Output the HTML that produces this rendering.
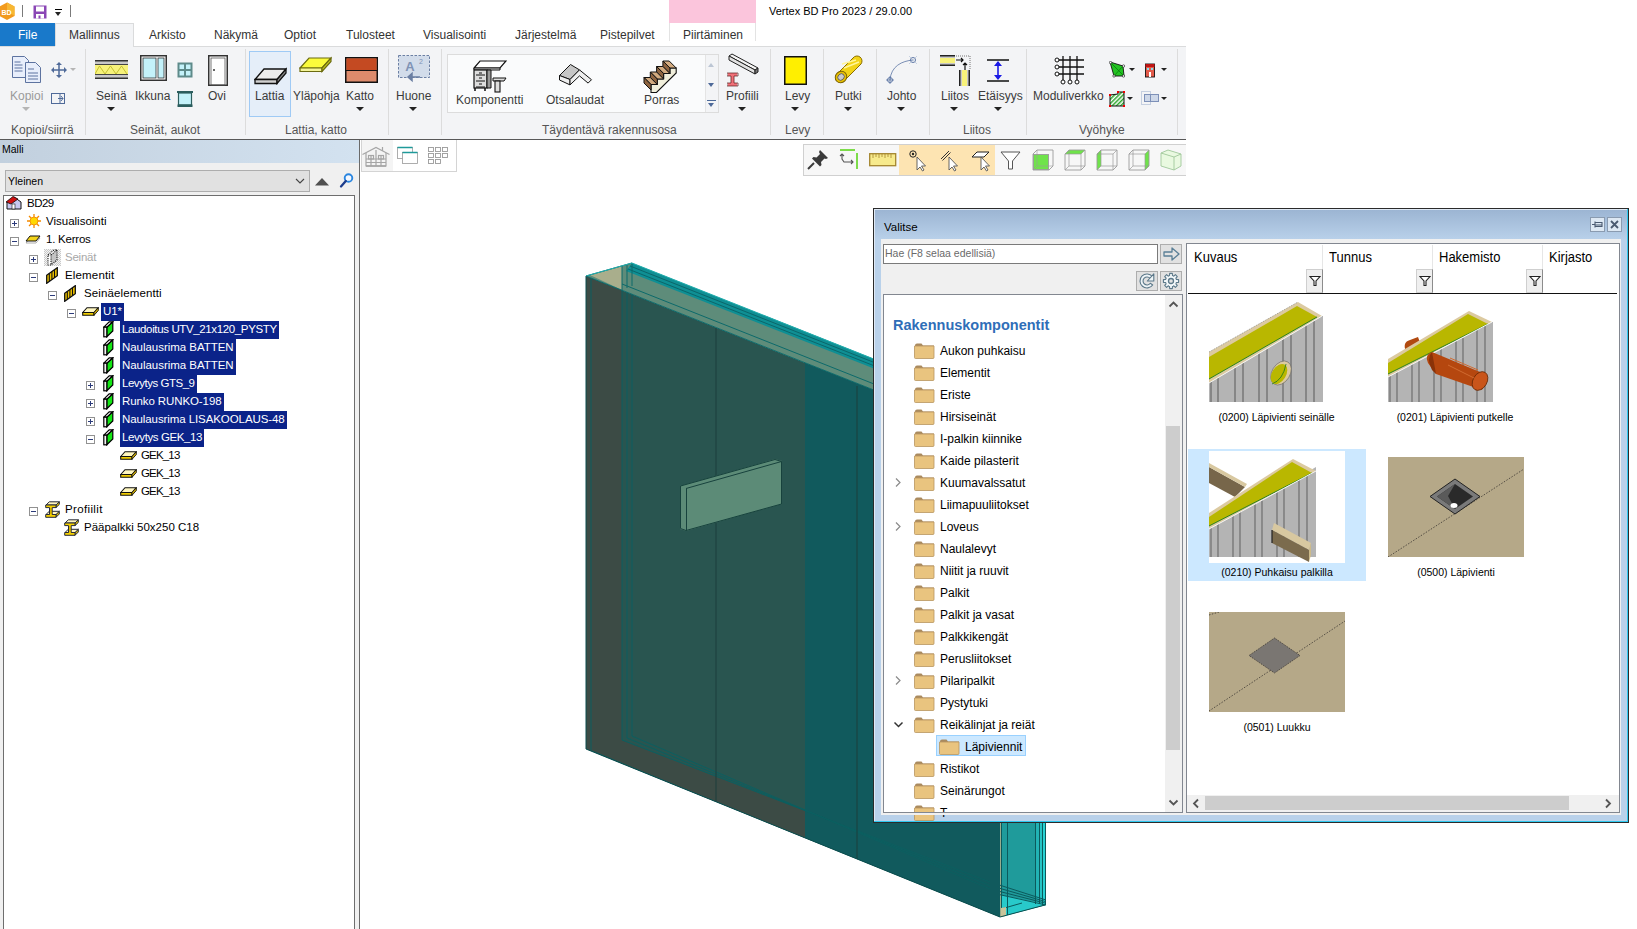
<!DOCTYPE html>
<html><head><meta charset="utf-8">
<style>
*{margin:0;padding:0;box-sizing:border-box}
html,body{width:1637px;height:929px;overflow:hidden;background:#fff;font-family:"Liberation Sans",sans-serif;color:#000}
.a{position:absolute}
.t{position:absolute;white-space:nowrap;line-height:1}
.rl{font-size:12px;color:#3b3b3b}
.gl{font-size:12px;color:#555}
.tab{font-size:12px;color:#333}
.sep{position:absolute;width:1px;background:#dcdcdc;top:49px;height:86px}
.dd{position:absolute;width:0;height:0;border-left:4px solid transparent;border-right:4px solid transparent;border-top:4px solid #222}
.tr{font-size:11.5px}
.sel{background:#0a246a;color:#fff;padding:0 2px}
.exp{position:absolute;width:9px;height:9px;border:1px solid #919191;background:#fff}
.exp:before{content:"";position:absolute;left:1px;top:3px;width:5px;height:1px;background:#2c3b7a}
.exp.p:after{content:"";position:absolute;left:3px;top:1px;width:1px;height:5px;background:#2c3b7a}
.fold{position:absolute;width:20px;height:15px}
.dt{font-size:12px;color:#000}
.cap{font-size:10.5px;color:#000}
</style></head><body>

<!-- title bar -->
<div class="a" style="left:669px;top:0;width:87px;height:23px;background:#fbc5dc"></div>
<div class="t" style="left:769px;top:6px;font-size:11px;color:#000">Vertex BD Pro 2023 / 29.0.00</div>

<!-- tabs -->
<div class="a" style="left:0;top:23px;width:55px;height:23px;background:#1979ca"></div>
<div class="t tab" style="left:18px;top:29px;color:#fff">File</div>
<div class="a" style="left:55px;top:23px;width:79px;height:24px;background:#f3f4f6;border:1px solid #dadbdc;border-bottom:none"></div>
<div class="t tab" style="left:69px;top:29px">Mallinnus</div>
<div class="t tab" style="left:149px;top:29px">Arkisto</div>
<div class="t tab" style="left:214px;top:29px">Näkymä</div>
<div class="t tab" style="left:284px;top:29px">Optiot</div>
<div class="t tab" style="left:346px;top:29px">Tulosteet</div>
<div class="t tab" style="left:423px;top:29px">Visualisointi</div>
<div class="t tab" style="left:515px;top:29px">Järjestelmä</div>
<div class="t tab" style="left:600px;top:29px">Pistepilvet</div>
<div class="a" style="left:669px;top:23px;width:87px;height:18px;border-left:1px solid #e3e3e3;border-right:1px solid #e3e3e3"></div>
<div class="t tab" style="left:683px;top:29px">Piirtäminen</div>

<!-- ribbon -->
<div class="a" style="left:0;top:46px;width:1186px;height:93px;background:#f3f4f6;border-top:1px solid #dadbdc"></div>
<div class="a" style="left:55px;top:46px;width:78px;height:2px;background:#f3f4f6"></div>
<div class="a" style="left:0;top:139px;width:1186px;height:1px;background:#585858"></div>
<!-- quick access -->
<svg class="a" style="left:0;top:2px" width="16" height="19" viewBox="0 0 16 19"><polygon points="7,0.5 14.5,4.5 14.5,14 7,18 -0.5,14 -0.5,4.5" fill="#f29a1d"/><polygon points="7,0.5 14.5,4.5 14.5,14 7,9" fill="#f7b733"/><text x="6.5" y="12.5" font-family="Liberation Sans" font-size="7" font-weight="bold" fill="#fff" text-anchor="middle">BD</text></svg>
<div class="a" style="left:22px;top:5px;width:1px;height:12px;background:#7a7a7a"></div>
<svg class="a" style="left:33px;top:5px" width="14" height="14" viewBox="0 0 14 14"><rect x="0.5" y="0.5" width="13" height="13" fill="#8a46b5"/><rect x="3" y="1.5" width="8" height="5" fill="#fff"/><rect x="3" y="9" width="8" height="4.5" fill="#fff"/><rect x="5.5" y="10.5" width="2" height="3" fill="#8a46b5"/></svg>
<div class="a" style="left:55px;top:9px;width:7px;height:1px;background:#000"></div>
<div class="dd" style="left:55px;top:12px;border-left-width:3.5px;border-right-width:3.5px;border-top-width:4px"></div>
<div class="a" style="left:70px;top:5px;width:1px;height:12px;background:#7a7a7a"></div>

<!-- Kopioi/siirra group -->
<svg class="a" style="left:12px;top:56px" width="31" height="27" viewBox="0 0 31 27"><path d="M0.5 0.5h12l4 4v17h-16z" fill="#e8eefb" stroke="#5d73a0"/><path d="M2.5 6h6M2.5 9h8M2.5 12h8M2.5 15h8" stroke="#5d73a0"/><path d="M13.5 6.5h10l5 5v15h-15z" fill="#e8eefb" stroke="#5d73a0"/><path d="M16 13h6M16 17h10M16 20h10M16 23h10" stroke="#5d73a0"/></svg>
<svg class="a" style="left:51px;top:62px" width="16" height="16" viewBox="0 0 16 16"><path d="M8 1v14M1 8h14" stroke="#4f6a99" stroke-width="1.5"/><path d="M8 0l-3 3h6zM8 16l-3-3h6zM0 8l3-3v6zM16 8l-3-3v6z" fill="#4f6a99"/></svg>
<div class="dd" style="left:70px;top:68px;border-top-color:#b5b5b5;border-left-width:3px;border-right-width:3px;border-top-width:3px"></div>
<div class="t rl" style="left:10px;top:90px;color:#9a9a9a">Kopioi</div>
<div class="dd" style="left:22px;top:107px;border-top-color:#b5b5b5"></div>
<svg class="a" style="left:51px;top:93px" width="15" height="11" viewBox="0 0 15 11"><rect x="0.5" y="0.5" width="13" height="10" fill="none" stroke="#4f6a99"/><path d="M7 5.5h5M10 3l2 2.5-2 2.5M9 0v11" stroke="#4f6a99" fill="none"/></svg>
<div class="t gl" style="left:11px;top:124px">Kopioi/siirrä</div>
<div class="sep" style="left:85px"></div>

<!-- Seinat, aukot -->
<svg class="a" style="left:95px;top:60px" width="33" height="19" viewBox="0 0 33 19"><rect x="0" y="0" width="33" height="19" fill="#c8c8c8"/><rect x="0" y="0" width="33" height="1.5" fill="#333"/><rect x="0" y="4" width="33" height="1" fill="#444"/><rect x="0" y="5" width="33" height="9" fill="#f7f27a"/><path d="M0 14l4.5-8 5.5 8 5.5-8 5.5 8 5.5-8 5.5 8" fill="none" stroke="#b8b420" stroke-width="0.8"/><rect x="0" y="14" width="33" height="1" fill="#444"/><rect x="0" y="17.5" width="33" height="1.5" fill="#333"/></svg>
<div class="t rl" style="left:96px;top:90px">Seinä</div>
<div class="dd" style="left:107px;top:107px"></div>
<svg class="a" style="left:140px;top:55px" width="27" height="26" viewBox="0 0 27 26"><rect x="0.75" y="0.75" width="25.5" height="24.5" fill="#fff" stroke="#333" stroke-width="1.5"/><rect x="3" y="3" width="13" height="20" fill="#c4f2fa" stroke="#333" stroke-width="0.8"/><rect x="18" y="3" width="6" height="20" fill="#c4f2fa" stroke="#333" stroke-width="0.8"/></svg>
<div class="t rl" style="left:135px;top:90px">Ikkuna</div>
<svg class="a" style="left:177px;top:62px" width="16" height="16" viewBox="0 0 16 16"><rect x="0.5" y="0.5" width="15" height="15" fill="#5e8a8a"/><rect x="2.5" y="2.5" width="4.5" height="4.5" fill="#c4f2fa"/><rect x="9" y="2.5" width="4.5" height="4.5" fill="#c4f2fa"/><rect x="2.5" y="9" width="4.5" height="4.5" fill="#c4f2fa"/><rect x="9" y="9" width="4.5" height="4.5" fill="#c4f2fa"/></svg>
<svg class="a" style="left:177px;top:91px" width="16" height="17" viewBox="0 0 16 17"><rect x="0" y="0" width="16" height="2" fill="#2c5e5e"/><rect x="1.5" y="2" width="13" height="12" fill="#c4f2fa" stroke="#2c5e5e" stroke-width="1.2"/><rect x="0.5" y="13.5" width="15" height="2.5" fill="#2c5e5e"/></svg>
<svg class="a" style="left:208px;top:55px" width="20" height="31" viewBox="0 0 20 31"><rect x="0.75" y="0.75" width="18.5" height="29.5" fill="#fff" stroke="#333" stroke-width="1.5"/><rect x="3" y="3" width="14" height="27" fill="none" stroke="#555" stroke-width="0.8"/><circle cx="6" cy="15" r="1" fill="#333"/></svg>
<div class="t rl" style="left:208px;top:90px">Ovi</div>
<div class="t gl" style="left:130px;top:124px">Seinät, aukot</div>
<div class="sep" style="left:245px"></div>

<!-- Lattia, katto -->
<div class="a" style="left:249px;top:51px;width:42px;height:66px;background:#e5eef9;border:1px solid #9fcaf5"></div>
<svg class="a" style="left:254px;top:67px" width="33" height="18" viewBox="0 0 33 18"><path d="M1 12.5L10 2h22l-9 10.5z" fill="#ececec" stroke="#111" stroke-width="1.3"/><path d="M1 12.5h22v4H1z" fill="#cfcfcf" stroke="#111" stroke-width="1.3"/><path d="M23 12.5L32 2v4l-9 10.5z" fill="#8a8a8a" stroke="#111" stroke-width="1.3"/></svg>
<div class="t rl" style="left:255px;top:90px">Lattia</div>
<svg class="a" style="left:299px;top:56px" width="33" height="17" viewBox="0 0 33 17"><path d="M1 12L10 2h22l-9 10z" fill="#fbfb3c" stroke="#6b6b10" stroke-width="1.2"/><path d="M1 12h22v3.5H1z" fill="#f4f49a" stroke="#6b6b10" stroke-width="1.2"/><path d="M23 12L32 2v3.5l-9 10z" fill="#c9c920" stroke="#6b6b10" stroke-width="1.2"/></svg>
<div class="t rl" style="left:293px;top:90px">Yläpohja</div>
<svg class="a" style="left:345px;top:57px" width="33" height="26" viewBox="0 0 33 26"><rect x="0.75" y="0.75" width="31.5" height="24.5" fill="#dd8b6c" stroke="#111" stroke-width="1.5"/><rect x="1.5" y="1.5" width="30" height="12" fill="#c44a22"/><path d="M1 13.5h31" stroke="#111" stroke-width="1"/></svg>
<div class="t rl" style="left:346px;top:90px">Katto</div>
<div class="dd" style="left:356px;top:107px"></div>
<div class="t gl" style="left:285px;top:124px">Lattia, katto</div>
<div class="sep" style="left:388px"></div>

<svg class="a" style="left:398px;top:55px" width="33" height="28" viewBox="0 0 33 28"><rect x="0.5" y="0.5" width="31" height="22" fill="#d2dcea" stroke="#6b7fa3" stroke-dasharray="2.5 1.5"/><text x="12" y="16" font-family="Liberation Sans" font-weight="bold" font-size="13" fill="#7f93b5" text-anchor="middle">A</text><text x="21" y="9" font-family="Liberation Sans" font-size="7" fill="#7f93b5">2</text><path d="M10 22h12M10 22l4-3.5v7z" stroke="#6b7fa3" fill="#6b7fa3" stroke-width="1.5"/></svg>
<div class="t rl" style="left:396px;top:90px">Huone</div>
<div class="dd" style="left:409px;top:107px"></div>
<div class="sep" style="left:441px"></div>

<!-- gallery -->
<div class="a" style="left:447px;top:54px;width:272px;height:59px;background:#fafbfc;border:1px solid #dcdcdc"></div>
<div class="a" style="left:705px;top:55px;width:13px;height:57px;background:#f3f4f6;border-left:1px solid #e4e4e4"></div>
<div class="dd" style="left:708px;top:63px;border-top:none;border-bottom:4px solid #bcc6d4;border-left-width:3.5px;border-right-width:3.5px"></div>
<div class="dd" style="left:708px;top:83px;border-top-color:#4e6a99;border-left-width:3.5px;border-right-width:3.5px"></div>
<div class="a" style="left:707px;top:100px;width:9px;height:1px;background:#4e6a99"></div>
<div class="dd" style="left:708px;top:103px;border-top-color:#4e6a99;border-left-width:3.5px;border-right-width:3.5px"></div>
<svg class="a" style="left:473px;top:60px" width="34" height="33" viewBox="0 0 34 33"><path d="M7 1h26l-6 7H1z" fill="#fff" stroke="#111" stroke-width="1.2"/><path d="M1 8h26v2H1z" fill="#ddd" stroke="#111" stroke-width="1"/><rect x="1" y="10" width="13" height="18" fill="#ddd" stroke="#111" stroke-width="1.2"/><path d="M14 10h4v18h-4z" fill="#999" stroke="#111" stroke-width="1"/><path d="M3 15h9M3 21h9M3 27h9" stroke="#111" stroke-width="1"/><path d="M6 13h3M6 18h3M6 24h3" stroke="#111" stroke-width="1"/><path d="M2 28v3M12 28v3" stroke="#111" stroke-width="1.5"/><path d="M20 18h13l-2 3H20z" fill="#ddd" stroke="#111" stroke-width="1"/><rect x="22" y="21" width="5" height="11" fill="#ddd" stroke="#111" stroke-width="1.1"/></svg>
<div class="t rl" style="left:456px;top:94px">Komponentti</div>
<svg class="a" style="left:559px;top:64px" width="34" height="23" viewBox="-0.5 -0.5 34 23"><defs><pattern id="htc" width="2" height="2" patternUnits="userSpaceOnUse"><rect width="2" height="2" fill="#fff"/><rect width="1" height="1" fill="#bbb"/></pattern></defs><polygon points="0,11 11,0 20,5.4 10.5,15" fill="#c6c6c6" stroke="#111" stroke-width="1"/><polygon points="0,11 10.5,15 10.5,20.4 0,15.5" fill="url(#htc)" stroke="#111" stroke-width="1"/><polygon points="20,5.4 32,15.2 28.6,18.6 20,11.4 10.5,20.4 10.5,15" fill="url(#htc)" stroke="#111" stroke-width="1"/></svg>
<div class="t rl" style="left:546px;top:94px">Otsalaudat</div>
<svg class="a" style="left:643px;top:60px" width="34" height="34" viewBox="-1 -1 34 34"><polygon points="7.0,29.5 7.0,23.5 13.3,23.5 13.3,18.0 19.6,18.0 19.6,12.5 25.9,12.5 25.9,7.0 32.2,7.0 32.2,12.0 12.5,31.5 7.0,31.5" fill="#f1efdc" stroke="#111" stroke-width="1.1"/><polygon points="18.9,0.0 25.2,0.0 32.2,7.0 25.9,7.0" fill="#d3ab80" stroke="#111" stroke-width="1"/><polygon points="18.9,0.0 25.9,7.0 25.9,12.5 18.9,5.5" fill="#8e6440" stroke="#111" stroke-width="1"/><polygon points="12.6,5.5 18.9,5.5 25.9,12.5 19.6,12.5" fill="#d3ab80" stroke="#111" stroke-width="1"/><polygon points="12.6,5.5 19.6,12.5 19.6,18.0 12.6,11.0" fill="#8e6440" stroke="#111" stroke-width="1"/><polygon points="6.3,11.0 12.6,11.0 19.6,18.0 13.3,18.0" fill="#d3ab80" stroke="#111" stroke-width="1"/><polygon points="6.3,11.0 13.3,18.0 13.3,23.5 6.3,16.5" fill="#8e6440" stroke="#111" stroke-width="1"/><polygon points="0.0,16.5 6.3,16.5 13.3,23.5 7.0,23.5" fill="#d3ab80" stroke="#111" stroke-width="1"/><polygon points="0.0,16.5 7.0,23.5 7.0,29.0 0.0,22.0" fill="#8e6440" stroke="#111" stroke-width="1"/></svg>
<div class="t rl" style="left:644px;top:94px">Porras</div>
<svg class="a" style="left:727px;top:53px" width="32" height="34" viewBox="0 0 32 34"><polygon points="2,3 5,1 31,15 28,17" fill="#f4f4f4" stroke="#222" stroke-width="1"/><polygon points="2,3 28,17 28,21 2,7" fill="#e2e2e2" stroke="#222" stroke-width="1"/><polygon points="28,17 31,15 31,19 28,21" fill="#777" stroke="#222" stroke-width="1"/><path d="M1 21.5h9M1 31.5h9M5.5 21.5v10" stroke="#f07078" stroke-width="3.2"/><path d="M0 20h11v3H7v7h4v3H0v-3h4v-7H0z" fill="none" stroke="#5a1a1a" stroke-width="0.7"/></svg>
<div class="t rl" style="left:726px;top:90px">Profiili</div>
<div class="dd" style="left:738px;top:107px"></div>
<div class="t gl" style="left:542px;top:124px">Täydentävä rakennusosa</div>
<div class="sep" style="left:770px"></div>

<!-- Levy -->
<svg class="a" style="left:784px;top:56px" width="23" height="29" viewBox="0 0 23 29"><rect x="0.75" y="0.75" width="21.5" height="27.5" fill="#ffef00" stroke="#111" stroke-width="1.5"/></svg>
<div class="t rl" style="left:785px;top:90px">Levy</div>
<div class="dd" style="left:791px;top:107px"></div>
<div class="t gl" style="left:785px;top:124px">Levy</div>
<div class="sep" style="left:823px"></div>
<svg class="a" style="left:834px;top:55px" width="29" height="30" viewBox="0 0 29 30"><path d="M3 19L19 3a4.5 4.5 0 0 1 8 6L11 25z" fill="#f2d317" stroke="#8a6d00" stroke-width="1"/><path d="M8 9L22 5M10 13L25 7" stroke="#fff59a" stroke-width="1.5"/><ellipse cx="7" cy="22" rx="5.5" ry="6" transform="rotate(45 7 22)" fill="#e8c000" stroke="#7a6000"/><ellipse cx="7" cy="22" rx="3" ry="3.5" transform="rotate(45 7 22)" fill="#c9c9c9" stroke="#555" stroke-width="0.8"/></svg>
<div class="t rl" style="left:835px;top:90px">Putki</div>
<div class="dd" style="left:844px;top:107px"></div>
<div class="sep" style="left:876px"></div>
<svg class="a" style="left:885px;top:54px" width="34" height="32" viewBox="0 0 34 32"><path d="M5 26C6 12 17 7 28 6" fill="none" stroke="#7a8fb5" stroke-width="1"/><circle cx="5" cy="26" r="2.5" fill="none" stroke="#5e77a5"/><path d="M1 26h8M5 22v8" stroke="#5e77a5" stroke-width="0.8"/><circle cx="28" cy="6" r="2.5" fill="none" stroke="#5e77a5"/><path d="M24 2l8 8M32 2l-8 8" stroke="#a9b8d4" stroke-width="0.6"/></svg>
<div class="t rl" style="left:887px;top:90px">Johto</div>
<div class="dd" style="left:897px;top:107px"></div>
<div class="sep" style="left:929px"></div>
<svg class="a" style="left:940px;top:55px" width="31" height="31" viewBox="0 0 31 31"><rect x="0" y="0" width="15" height="11" fill="#c8c8c8"/><rect x="0" y="0" width="15" height="1.5" fill="#222"/><rect x="0" y="3" width="15" height="5" fill="#f7f27a"/><rect x="0" y="9.5" width="15" height="1.5" fill="#222"/><rect x="19" y="15" width="11" height="16" fill="#c8c8c8"/><rect x="19" y="15" width="1.5" height="16" fill="#222"/><rect x="22" y="15" width="5" height="16" fill="#f7f27a"/><rect x="28.5" y="15" width="1.5" height="16" fill="#222"/><path d="M16 1h14v14" fill="none" stroke="#555" stroke-dasharray="1 1" stroke-width="0.8"/><path d="M16 5h7M21 3l2 2-2 2M25 15V8M23 10l2-2 2 2" stroke="#111" stroke-width="1.2" fill="none"/></svg>
<div class="t rl" style="left:941px;top:90px">Liitos</div>
<div class="dd" style="left:950px;top:107px"></div>
<svg class="a" style="left:987px;top:59px" width="23" height="23" viewBox="0 0 23 23"><path d="M0 1h22M0 22h22" stroke="#111" stroke-width="1.5"/><path d="M11 3v17" stroke="#1a1ae6" stroke-width="1.6"/><path d="M11 2l-4 5h8zM11 21l-4-5h8z" fill="#1a1ae6"/></svg>
<div class="t rl" style="left:978px;top:90px">Etäisyys</div>
<div class="dd" style="left:994px;top:107px"></div>
<div class="t gl" style="left:963px;top:124px">Liitos</div>
<div class="sep" style="left:1026px"></div>

<!-- Vyohyke -->
<svg class="a" style="left:1054px;top:55px" width="30" height="30" viewBox="0 0 30 30"><path d="M4 5h26M4 12h26M4 19h26M9 1v24M16 1v24M23 1v24" stroke="#111" stroke-width="1.3"/><circle cx="3" cy="5" r="2" fill="#fff" stroke="#111" stroke-width="1"/><circle cx="3" cy="12" r="2" fill="#fff" stroke="#111" stroke-width="1"/><circle cx="3" cy="19" r="2" fill="#fff" stroke="#111" stroke-width="1"/><circle cx="9" cy="27" r="2" fill="#fff" stroke="#111" stroke-width="1"/><circle cx="16" cy="27" r="2" fill="#fff" stroke="#111" stroke-width="1"/><circle cx="23" cy="27" r="2" fill="#fff" stroke="#111" stroke-width="1"/></svg>
<div class="t rl" style="left:1033px;top:90px">Moduliverkko</div>
<svg class="a" style="left:1109px;top:61px" width="17" height="17" viewBox="0 0 17 17"><path d="M1 1l13 4 1 10-10 0z" fill="#22c322" stroke="#111" stroke-width="0.9"/><path d="M5 15L14 5M1 1l14 14" stroke="#0a7a0a" stroke-width="0.8"/><circle cx="1.5" cy="1.5" r="1.2" fill="#fff" stroke="#111" stroke-width="0.6"/><circle cx="14.5" cy="5" r="1.2" fill="#fff" stroke="#111" stroke-width="0.6"/><circle cx="14.5" cy="15" r="1.2" fill="#fff" stroke="#111" stroke-width="0.6"/><circle cx="5" cy="15" r="1.2" fill="#fff" stroke="#111" stroke-width="0.6"/></svg>
<div class="dd" style="left:1129px;top:68px;border-left-width:3px;border-right-width:3px;border-top-width:3px"></div>
<svg class="a" style="left:1145px;top:63px" width="10" height="15" viewBox="0 0 10 15"><rect x="0.5" y="1" width="9" height="13" fill="#e25a4a" stroke="#111" stroke-width="0.9"/><rect x="0.5" y="1" width="9" height="3" fill="#c01515"/><rect x="2" y="5" width="2" height="2" fill="#8de"/><rect x="6" y="5" width="2" height="2" fill="#8de"/><rect x="4" y="9" width="2" height="5" fill="#fff"/></svg>
<div class="dd" style="left:1161px;top:68px;border-left-width:3px;border-right-width:3px;border-top-width:3px"></div>
<svg class="a" style="left:1109px;top:91px" width="17" height="16" viewBox="0 0 17 16"><defs><pattern id="hatch" width="3" height="3" patternUnits="userSpaceOnUse" patternTransform="rotate(45)"><rect width="3" height="3" fill="#fff"/><rect width="1.5" height="3" fill="#2aa52a"/></pattern></defs><path d="M1 4l8-1V1h6v14H1z" fill="url(#hatch)" stroke="#111" stroke-width="1"/><rect x="0" y="3" width="2" height="2" fill="#e00"/><rect x="8" y="0" width="2" height="2" fill="#e00"/><rect x="14" y="0" width="2" height="2" fill="#e00"/><rect x="0" y="14" width="2" height="2" fill="#e00"/><rect x="14" y="14" width="2" height="2" fill="#e00"/></svg>
<div class="dd" style="left:1127px;top:97px;border-left-width:3px;border-right-width:3px;border-top-width:3px"></div>
<svg class="a" style="left:1141px;top:91px" width="18" height="16" viewBox="0 0 18 16"><rect x="0.5" y="0.5" width="9" height="13" fill="none" stroke="#c5cfe0"/><rect x="3.5" y="3.5" width="14" height="7" fill="#cdd7e8" stroke="#7d90b8"/><path d="M9.5 3.5v7" stroke="#7d90b8"/></svg>
<div class="dd" style="left:1161px;top:97px;border-left-width:3px;border-right-width:3px;border-top-width:3px"></div>
<div class="t gl" style="left:1079px;top:124px">Vyöhyke</div>
<div class="sep" style="left:1177px"></div>


<!-- left panel -->
<div class="a" style="left:0;top:140px;width:359px;height:23px;background:linear-gradient(90deg,#c2d0de,#d3e2f0)"></div>
<div class="t" style="left:2px;top:144px;font-size:10.5px">Malli</div>
<div class="a" style="left:0;top:163px;width:359px;height:766px;background:#f0f0f0"></div>
<div class="a" style="left:359px;top:140px;width:1px;height:789px;background:#6a6a6a"></div>

<!-- tree -->
<div class="a" style="left:5px;top:170px;width:305px;height:22px;background:#e1e1e1;border:1px solid #adadad"></div>
<div class="t tr" style="left:8px;top:176px;font-size:10.5px">Yleinen</div>
<svg class="a" style="left:295px;top:178px" width="10" height="6" viewBox="0 0 10 6"><path d="M1 1l4 4 4-4" fill="none" stroke="#444" stroke-width="1.1"/></svg>
<svg class="a" style="left:314px;top:177px" width="16" height="9" viewBox="0 0 16 9"><path d="M1 8.5L8 1l7 7.5z" fill="#505050"/></svg>
<svg class="a" style="left:339px;top:172px" width="15" height="17" viewBox="0 0 15 17"><circle cx="9.5" cy="6" r="3.8" fill="#f4f8ff" stroke="#2a86e0" stroke-width="1.9"/><path d="M6.8 9L2 14.5" stroke="#1d3d8c" stroke-width="2.3" stroke-linecap="round"/></svg>
<div class="a" style="left:3px;top:195px;width:352px;height:740px;background:#fff;border:1px solid #6e6e6e"></div>
<div class="a" style="left:354px;top:195px;width:1px;height:734px;background:#6e6e6e"></div>
<svg class="a" style="left:6px;top:196px" width="16" height="14" viewBox="0 0 16 14"><path d="M1 6L8 1l7 5v7H1z" fill="#c8c8f0" stroke="#111" stroke-width="1"/><path d="M0 6L7 0.5 12 3 5 8z" fill="#d01010" stroke="#111" stroke-width="0.8"/><rect x="6" y="8" width="3" height="5" fill="#fff" stroke="#111" stroke-width="0.6"/></svg>
<div class="t tr" style="left:27px;top:198px;color:#000;letter-spacing:-0.525px;">BD29</div>
<div class="exp p" style="left:10px;top:219px"></div>
<svg class="a" style="left:27px;top:214px" width="14" height="14" viewBox="0 0 14 14"><circle cx="7" cy="7" r="4" fill="#ffd800" stroke="#f08000" stroke-width="0.8"/><path d="M7 0v3M7 11v3M0 7h3M11 7h3M2 2l2 2M10 10l2 2M12 2l-2 2M2 12l2-2" stroke="#f58a00" stroke-width="1.3"/></svg>
<div class="t tr" style="left:46px;top:216px;color:#000;">Visualisointi</div>
<div class="exp " style="left:10px;top:237px"></div>
<svg class="a" style="left:25px;top:233px" width="16" height="12" viewBox="0 0 16 12"><path d="M1 10l4-5h10l-4 5z" fill="#fff" stroke="#999" stroke-width="0.8"/><path d="M1 8l4-5h10l-4 5z" fill="#f2d31a" stroke="#111" stroke-width="1"/></svg>
<div class="t tr" style="left:46px;top:234px;color:#000;letter-spacing:-0.233px;">1. Kerros</div>
<div class="exp p" style="left:29px;top:255px"></div>
<svg class="a" style="left:44px;top:249px" width="17" height="17" viewBox="0 0 17 17"><defs><pattern id="chk" width="2" height="2" patternUnits="userSpaceOnUse"><rect width="2" height="2" fill="#f4f4f4"/><rect width="1" height="1" fill="#c8c8c8"/><rect x="1" y="1" width="1" height="1" fill="#c8c8c8"/></pattern></defs><rect width="17" height="17" fill="url(#chk)"/><path d="M4 6L10 1h3v10l-6 5H4z" fill="#fff"/><path d="M7 6L13 1v10l-6 5z" fill="#c4c4c4"/><path d="M4 6L10 1h3v10l-6 5H4zM4 6h3v10M7 6l6-5" fill="none" stroke="#222" stroke-width="1.1" stroke-dasharray="1.2 1"/></svg>
<div class="t tr" style="left:65px;top:252px;color:#a8a8a8;letter-spacing:-0.233px;">Seinät</div>
<div class="exp " style="left:29px;top:273px"></div>
<svg class="a" style="left:46px;top:267px" width="13" height="17" viewBox="0 0 13 17"><path d="M0.7 8.3L11.3 0.7V8.7L0.7 16.3z" fill="#f2c600" stroke="#111" stroke-width="1.3"/><path d="M3.3 6.5V14.5M5.9 4.6V12.6M8.5 2.8V10.8" stroke="#111" stroke-width="1.1"/></svg>
<div class="t tr" style="left:65px;top:270px;color:#000;letter-spacing:0.156px;">Elementit</div>
<div class="exp " style="left:48px;top:291px"></div>
<svg class="a" style="left:64px;top:285px" width="13" height="17" viewBox="0 0 13 17"><path d="M0.7 8.3L11.3 0.7V8.7L0.7 16.3z" fill="#f2c600" stroke="#111" stroke-width="1.3"/><path d="M3.3 6.5V14.5M5.9 4.6V12.6M8.5 2.8V10.8" stroke="#111" stroke-width="1.1"/></svg>
<div class="t tr" style="left:84px;top:288px;color:#000;letter-spacing:0.121px;">Seinäelementti</div>
<div class="exp " style="left:67px;top:309px"></div>
<svg class="a" style="left:82px;top:307px" width="17" height="9" viewBox="0 0 17 9"><path d="M0.7 5.5L5 0.7h11.3l-4.3 4.8z" fill="#fff7c0" stroke="#111" stroke-width="1.1"/><path d="M0.7 5.5h11.3v2.8H0.7z" fill="#f0cc00" stroke="#111" stroke-width="1.1"/><path d="M12 5.5l4.3-4.8v2.8L12 8.3z" fill="#d8b400" stroke="#111" stroke-width="0.9"/></svg>
<div class="a" style="left:101px;top:303px;height:18px;background:#0b2389;padding:0 2px"><div style="font-size:11.5px;line-height:17px;color:#fff;white-space:nowrap;letter-spacing:-0.067px;">U1*</div></div>
<svg class="a" style="left:103px;top:321px" width="11" height="17" viewBox="0 0 11 17"><path d="M3.8 6.2L9.8 0.8V10L3.8 15.8z" fill="#14e614" stroke="#000" stroke-width="1.2"/><path d="M0.8 6.2L6.2 0.8H9.8L3.8 6.2z" fill="#fff" stroke="#000" stroke-width="1.2"/><rect x="0.8" y="6.2" width="3" height="9.6" fill="#f2f2f2" stroke="#000" stroke-width="1.2"/></svg>
<div class="a" style="left:120px;top:321px;height:18px;background:#0b2389;padding:0 2px"><div style="font-size:11.5px;line-height:17px;color:#fff;white-space:nowrap;letter-spacing:-0.369px;">Laudoitus UTV_21x120_PYSTY</div></div>
<svg class="a" style="left:103px;top:339px" width="11" height="17" viewBox="0 0 11 17"><path d="M3.8 6.2L9.8 0.8V10L3.8 15.8z" fill="#14e614" stroke="#000" stroke-width="1.2"/><path d="M0.8 6.2L6.2 0.8H9.8L3.8 6.2z" fill="#fff" stroke="#000" stroke-width="1.2"/><rect x="0.8" y="6.2" width="3" height="9.6" fill="#f2f2f2" stroke="#000" stroke-width="1.2"/></svg>
<div class="a" style="left:120px;top:339px;height:18px;background:#0b2389;padding:0 2px"><div style="font-size:11.5px;line-height:17px;color:#fff;white-space:nowrap;letter-spacing:-0.039px;">Naulausrima BATTEN</div></div>
<svg class="a" style="left:103px;top:357px" width="11" height="17" viewBox="0 0 11 17"><path d="M3.8 6.2L9.8 0.8V10L3.8 15.8z" fill="#14e614" stroke="#000" stroke-width="1.2"/><path d="M0.8 6.2L6.2 0.8H9.8L3.8 6.2z" fill="#fff" stroke="#000" stroke-width="1.2"/><rect x="0.8" y="6.2" width="3" height="9.6" fill="#f2f2f2" stroke="#000" stroke-width="1.2"/></svg>
<div class="a" style="left:120px;top:357px;height:18px;background:#0b2389;padding:0 2px"><div style="font-size:11.5px;line-height:17px;color:#fff;white-space:nowrap;letter-spacing:-0.039px;">Naulausrima BATTEN</div></div>
<div class="exp p" style="left:86px;top:381px"></div>
<svg class="a" style="left:103px;top:375px" width="11" height="17" viewBox="0 0 11 17"><path d="M3.8 6.2L9.8 0.8V10L3.8 15.8z" fill="#14e614" stroke="#000" stroke-width="1.2"/><path d="M0.8 6.2L6.2 0.8H9.8L3.8 6.2z" fill="#fff" stroke="#000" stroke-width="1.2"/><rect x="0.8" y="6.2" width="3" height="9.6" fill="#f2f2f2" stroke="#000" stroke-width="1.2"/></svg>
<div class="a" style="left:120px;top:375px;height:18px;background:#0b2389;padding:0 2px"><div style="font-size:11.5px;line-height:17px;color:#fff;white-space:nowrap;letter-spacing:-0.469px;">Levytys GTS_9</div></div>
<div class="exp p" style="left:86px;top:399px"></div>
<svg class="a" style="left:103px;top:393px" width="11" height="17" viewBox="0 0 11 17"><path d="M3.8 6.2L9.8 0.8V10L3.8 15.8z" fill="#14e614" stroke="#000" stroke-width="1.2"/><path d="M0.8 6.2L6.2 0.8H9.8L3.8 6.2z" fill="#fff" stroke="#000" stroke-width="1.2"/><rect x="0.8" y="6.2" width="3" height="9.6" fill="#f2f2f2" stroke="#000" stroke-width="1.2"/></svg>
<div class="a" style="left:120px;top:393px;height:18px;background:#0b2389;padding:0 2px"><div style="font-size:11.5px;line-height:17px;color:#fff;white-space:nowrap;letter-spacing:-0.100px;">Runko RUNKO-198</div></div>
<div class="exp p" style="left:86px;top:417px"></div>
<svg class="a" style="left:103px;top:411px" width="11" height="17" viewBox="0 0 11 17"><path d="M3.8 6.2L9.8 0.8V10L3.8 15.8z" fill="#14e614" stroke="#000" stroke-width="1.2"/><path d="M0.8 6.2L6.2 0.8H9.8L3.8 6.2z" fill="#fff" stroke="#000" stroke-width="1.2"/><rect x="0.8" y="6.2" width="3" height="9.6" fill="#f2f2f2" stroke="#000" stroke-width="1.2"/></svg>
<div class="a" style="left:120px;top:411px;height:18px;background:#0b2389;padding:0 2px"><div style="font-size:11.5px;line-height:17px;color:#fff;white-space:nowrap;letter-spacing:-0.088px;">Naulausrima LISAKOOLAUS-48</div></div>
<div class="exp " style="left:86px;top:435px"></div>
<svg class="a" style="left:103px;top:429px" width="11" height="17" viewBox="0 0 11 17"><path d="M3.8 6.2L9.8 0.8V10L3.8 15.8z" fill="#14e614" stroke="#000" stroke-width="1.2"/><path d="M0.8 6.2L6.2 0.8H9.8L3.8 6.2z" fill="#fff" stroke="#000" stroke-width="1.2"/><rect x="0.8" y="6.2" width="3" height="9.6" fill="#f2f2f2" stroke="#000" stroke-width="1.2"/></svg>
<div class="a" style="left:120px;top:429px;height:18px;background:#0b2389;padding:0 2px"><div style="font-size:11.5px;line-height:17px;color:#fff;white-space:nowrap;letter-spacing:-0.407px;">Levytys GEK_13</div></div>
<svg class="a" style="left:120px;top:451px" width="17" height="9" viewBox="0 0 17 9"><path d="M0.7 5.5L5 0.7h11.3l-4.3 4.8z" fill="#fff7c0" stroke="#111" stroke-width="1.1"/><path d="M0.7 5.5h11.3v2.8H0.7z" fill="#f0cc00" stroke="#111" stroke-width="1.1"/><path d="M12 5.5l4.3-4.8v2.8L12 8.3z" fill="#d8b400" stroke="#111" stroke-width="0.9"/></svg>
<div class="t tr" style="left:141px;top:450px;color:#000;letter-spacing:-0.833px;">GEK_13</div>
<svg class="a" style="left:120px;top:469px" width="17" height="9" viewBox="0 0 17 9"><path d="M0.7 5.5L5 0.7h11.3l-4.3 4.8z" fill="#fff7c0" stroke="#111" stroke-width="1.1"/><path d="M0.7 5.5h11.3v2.8H0.7z" fill="#f0cc00" stroke="#111" stroke-width="1.1"/><path d="M12 5.5l4.3-4.8v2.8L12 8.3z" fill="#d8b400" stroke="#111" stroke-width="0.9"/></svg>
<div class="t tr" style="left:141px;top:468px;color:#000;letter-spacing:-0.833px;">GEK_13</div>
<svg class="a" style="left:120px;top:487px" width="17" height="9" viewBox="0 0 17 9"><path d="M0.7 5.5L5 0.7h11.3l-4.3 4.8z" fill="#fff7c0" stroke="#111" stroke-width="1.1"/><path d="M0.7 5.5h11.3v2.8H0.7z" fill="#f0cc00" stroke="#111" stroke-width="1.1"/><path d="M12 5.5l4.3-4.8v2.8L12 8.3z" fill="#d8b400" stroke="#111" stroke-width="0.9"/></svg>
<div class="t tr" style="left:141px;top:486px;color:#000;letter-spacing:-0.833px;">GEK_13</div>
<div class="exp " style="left:29px;top:507px"></div>
<svg class="a" style="left:45px;top:501px" width="15" height="17" viewBox="0 0 15 17"><g stroke="#262a3a" stroke-width="1" stroke-linejoin="round"><path d="M11 13.5L14.3 10.3V13L11 16.3z" fill="#e8c400"/><path d="M1 13.5L4.3 10.3H14.3L11 13.5z" fill="#fff6bf"/><path d="M11 4L14.3 0.8V3.4L11 6.6z" fill="#e8c400"/><path d="M1 4L4.3 0.8H14.3L11 4z" fill="#fff6bf"/><path d="M0.7 4H11V6.6H7.2V13.5H11V16.3H0.7V13.5H4.5V6.6H0.7z" fill="#f5d000"/></g><rect x="5.5" y="7" width="1.2" height="6" fill="#b89a00"/></svg>
<div class="t tr" style="left:65px;top:504px;color:#000;letter-spacing:0.356px;">Profiilit</div>
<svg class="a" style="left:64px;top:519px" width="15" height="17" viewBox="0 0 15 17"><g stroke="#262a3a" stroke-width="1" stroke-linejoin="round"><path d="M11 13.5L14.3 10.3V13L11 16.3z" fill="#e8c400"/><path d="M1 13.5L4.3 10.3H14.3L11 13.5z" fill="#fff6bf"/><path d="M11 4L14.3 0.8V3.4L11 6.6z" fill="#e8c400"/><path d="M1 4L4.3 0.8H14.3L11 4z" fill="#fff6bf"/><path d="M0.7 4H11V6.6H7.2V13.5H11V16.3H0.7V13.5H4.5V6.6H0.7z" fill="#f5d000"/></g><rect x="5.5" y="7" width="1.2" height="6" fill="#b89a00"/></svg>
<div class="t tr" style="left:84px;top:522px;color:#000;">Pääpalkki 50x250 C18</div>
<!-- viewport -->
<!-- mini toolbar -->
<div class="a" style="left:361px;top:140px;width:96px;height:32px;background:#fff;border:1px solid #d4d4d4;border-top:none"></div>
<div class="a" style="left:362px;top:140px;width:31px;height:31px;background:#f4f4f4"></div>
<svg class="a" style="left:362px;top:146px" width="29" height="21" viewBox="0 0 29 21"><g fill="none" stroke="#a6a6a6" stroke-width="1.2"><path d="M0.5 8.5L14 1.5l13.5 7"/><path d="M4 7v13h20V7"/><path d="M4 16.5h20M4 13h20M9 9v11M14 4v16M19 9v11M20.5 1v4"/><rect x="6.5" y="9.5" width="5" height="3.5"/><rect x="16.5" y="9.5" width="5" height="3.5"/><path d="M4 20h20" stroke-width="1.6"/></g></svg>
<svg class="a" style="left:396px;top:146px" width="23" height="19" viewBox="0 0 23 19"><rect x="1.5" y="1.5" width="15" height="11" fill="#fff" stroke="#999" stroke-width="0.8"/><path d="M1.5 1.5h15" stroke="#1e9a9a" stroke-width="1.5"/><rect x="6.5" y="6.5" width="15" height="11" fill="#fff" stroke="#999" stroke-width="0.8"/><path d="M6.5 6.5h15" stroke="#1e9a9a" stroke-width="1.5"/></svg>
<svg class="a" style="left:427px;top:146px" width="22" height="19" viewBox="0 0 22 19"><g fill="none" stroke="#9a9a9a" stroke-width="0.9"><rect x="1.5" y="1.5" width="5" height="4"/><rect x="8.5" y="1.5" width="5" height="4"/><rect x="15.5" y="1.5" width="5" height="4"/><rect x="1.5" y="7.5" width="5" height="4"/><rect x="8.5" y="7.5" width="5" height="4"/><rect x="15.5" y="7.5" width="5" height="4"/><rect x="1.5" y="13.5" width="5" height="4"/><rect x="8.5" y="13.5" width="5" height="4"/></g></svg>

<!-- snap toolbar -->
<div class="a" style="left:803px;top:144px;width:383px;height:32px;background:#f7f7f7;border:1px solid #d0d0d0;border-right:none"></div>
<div class="a" style="left:899px;top:145px;width:96px;height:30px;background:#fde4b2"></div>
<svg class="a" style="left:807px;top:149px" width="22" height="21" viewBox="0 0 22 21"><path d="M13 1l8 8-2 1-1.5-0.5-3.5 3.5 0.5 3-1.5 1.5-8-8 1.5-1.5 3 0.5 3.5-3.5L12 3z" fill="#3a3a3a"/><path d="M7 14L1 20" stroke="#3a3a3a" stroke-width="2"/></svg>
<svg class="a" style="left:837px;top:149px" width="22" height="21" viewBox="0 0 22 21"><path d="M3 1h15" stroke="#7ddc4a" stroke-width="2"/><path d="M20 4v16" stroke="#7ddc4a" stroke-width="2"/><path d="M5 5v5l2 3h9M14 11l2 2-2 2M3 7l2-2 2 2" fill="none" stroke="#555" stroke-width="1.1"/></svg>
<svg class="a" style="left:869px;top:153px" width="28" height="14" viewBox="0 0 28 14"><rect x="0.7" y="0.7" width="26" height="12" fill="#f7ea8c" stroke="#a4852e" stroke-width="1.3"/><path d="M4 1v4M7 1v3M10 1v4M13 1v3M16 1v4M19 1v3M22 1v4" stroke="#a4852e" stroke-width="0.8"/></svg>
<svg class="a" style="left:908px;top:149px" width="25" height="23" viewBox="0 0 25 23"><circle cx="5" cy="5" r="3.2" fill="none" stroke="#222" stroke-width="1"/><circle cx="5" cy="5" r="1.2" fill="#222"/><path d="M9 8v13l3-3 2.5 4 1.5-1-2.5-4h4z" fill="#fff" stroke="#555" stroke-width="0.9"/></svg>
<svg class="a" style="left:940px;top:149px" width="25" height="23" viewBox="0 0 25 23"><path d="M1 10l8-8M2.5 11.5l8-8" stroke="#333" stroke-width="1"/><path d="M9 8v13l3-3 2.5 4 1.5-1-2.5-4h4z" fill="#fff" stroke="#555" stroke-width="0.9"/></svg>
<svg class="a" style="left:971px;top:149px" width="25" height="23" viewBox="0 0 25 23"><path d="M1 8l5-5h12l-5 5z" fill="#fff" stroke="#222" stroke-width="1"/><path d="M10 8v13l3-3 2.5 4 1.5-1-2.5-4h4z" fill="#fff" stroke="#555" stroke-width="0.9"/></svg>
<svg class="a" style="left:1000px;top:151px" width="22" height="19" viewBox="0 0 22 19"><path d="M1 1h19l-7.5 9v8h-4v-8z" fill="#fff" stroke="#555" stroke-width="1"/></svg>
<svg class="a" style="left:1032px;top:149px" width="22" height="22" viewBox="0 0 22 22"><path d="M1 5l4-4h16v16l-4 4H1z" fill="none" stroke="#9a9a9a" stroke-width="0.9"/><rect x="1.5" y="5.5" width="15" height="15" fill="#6fe34a" stroke="#9a9a9a" stroke-width="0.9"/><path d="M5 1v16h16M1 21l4-4" stroke="#9a9a9a" stroke-width="0.6" fill="none"/></svg>
<svg class="a" style="left:1064px;top:149px" width="22" height="22" viewBox="0 0 22 22"><path d="M1 5l4-4h16l-4 4z" fill="#6fe34a"/><path d="M1 5l4-4h16v16l-4 4H1z" fill="none" stroke="#9a9a9a" stroke-width="0.9"/><path d="M1 5h16v16M17 5l4-4M5 1v16h16M1 21l4-4" stroke="#9a9a9a" stroke-width="0.7" fill="none"/></svg>
<svg class="a" style="left:1096px;top:149px" width="22" height="22" viewBox="0 0 22 22"><path d="M1 5l4-4v16l-4 4z" fill="#6fe34a"/><path d="M1 5l4-4h16v16l-4 4H1z" fill="none" stroke="#9a9a9a" stroke-width="0.9"/><path d="M1 5h16v16M17 5l4-4M5 1v16h16M1 21l4-4" stroke="#9a9a9a" stroke-width="0.7" fill="none"/></svg>
<svg class="a" style="left:1128px;top:149px" width="22" height="22" viewBox="0 0 22 22"><path d="M17 5l4-4v16l-4 4z" fill="#6fe34a"/><path d="M1 5l4-4h16v16l-4 4H1z" fill="none" stroke="#9a9a9a" stroke-width="0.9"/><path d="M1 5h16v16M17 5l4-4M5 1v16h16M1 21l4-4" stroke="#9a9a9a" stroke-width="0.7" fill="none"/></svg>
<svg class="a" style="left:1160px;top:149px" width="22" height="22" viewBox="0 0 22 22"><path d="M1 4l7-3 13 4v12l-7 4L1 17z" fill="#e9f9e0" stroke="#9fc79a" stroke-width="0.9"/><path d="M1 4l13 4 7-3M14 8v13" stroke="#9fc79a" stroke-width="0.9" fill="none"/></svg>

<!-- wall -->
<svg class="a" style="left:0;top:0" width="1637" height="929" viewBox="0 0 1637 929">
 <defs><clipPath id="front"><polygon points="586,276 1000,440 1000,917 586,749"/></clipPath></defs>
 <!-- right end face -->
 <polygon points="999,440 1046,427 1046,905 999,917" fill="#1f9b9b"/>
 <polygon points="1035,430 1039,429 1039,903 1035,904" fill="#22b3b4"/>
 <polygon points="1039,429 1042,428 1042,904 1039,904" fill="#25c3c4"/>
 <polygon points="1042,428 1046,427 1046,905 1042,905" fill="#29d2d3"/>
 <polygon points="1001,895 1040,903 1046,905 1001,917" fill="#28caca"/>
 <g stroke="#0b5a5c" stroke-width="1" fill="none"><path d="M999.5,440V917M1001.5,439V917M1007.5,438V915M1035.5,430V904M1039.5,429V904M1042.5,428V905M1045.5,427V905"/></g>
 <path d="M1000.5,440V917" stroke="#b9b08a" stroke-width="0.8"/>
 <path d="M1001,909L1022,903" stroke="#0b5a5c" stroke-width="1"/>
 <polygon points="1001,908 1006,907 1006,916 1001,917" fill="#c9c49a"/>
 <g stroke="#0b5a5c" stroke-width="1" fill="none"><path d="M990,882L1046,900M990,885.5L1046,901.7M990,889L1046,903.3M990,892.5L1046,905"/></g>
 <!-- front -->
 <g clip-path="url(#front)">
  <rect x="580" y="270" width="430" height="660" fill="#295550"/>
  <rect x="805" y="270" width="200" height="660" fill="#115a5d"/>
  <polygon points="586,275 622,290 622,740 805,810.6 805,840 586,749" fill="#3c4b45"/>
  <g stroke="#0c5f60" stroke-width="1" fill="none">
   <path d="M591,277V751M622,290V740M627,292V738M632,294V736"/>
   <path d="M592,751L1000,919M622,740L990,882M627,738L990,885.5M632,736L990,889"/>
  </g>
  <path d="M716,328V802M857,386V860" stroke="#1d3f3d" stroke-width="1"/>
 </g>
 <!-- top face -->
 <polygon points="586,276 632,263 1045,427 1000,440" fill="#5e8c7a"/>
 <polygon points="590,275 622,266 622,290" fill="#a9ae8c"/>
 <polygon points="632,263 1045,427 1045,436 626,271" fill="#0f8f94"/>
 <g stroke="#0a5c60" stroke-width="0.8" fill="none">
  <path d="M630,266L1045,430M628,269L1045,433"/>
 </g>
 <g stroke="#0c6a6b" stroke-width="1" fill="none">
  <path d="M586,276L1000,440M622,284L1000,434"/>
  <path d="M586,276L632,263M622,290V266M627,288V265M632,286V263"/>
 </g>
 <path d="M586,276L632,263L1045,427" stroke="#23b0b0" stroke-width="1" fill="none"/>
 <path d="M586,276V749L1000,917L1045,905" stroke="#0a4d4e" stroke-width="1" fill="none"/>
 <!-- beam -->
 <polygon points="680,486 775,459 782,461 782,504 686,531 680,529" fill="#5c8b77"/>
 <path d="M680.5,486L775,459.5L781.5,461.5V504L686,530.5L680.5,528.5Z" stroke="#17423d" stroke-width="1" fill="none"/>
 <path d="M686,488.5L781.5,461.5M686.5,488.5V530.5" stroke="#17423d" stroke-width="1" fill="none"/>
</svg>


<!-- dialog -->
<div class="a" style="left:873px;top:208px;width:756px;height:615px;background:#b9d1ea;border:1px solid #2b2b2b"></div>
<div class="a" style="left:874px;top:209px;width:754px;height:31px;background:linear-gradient(#9bb4d2,#b9d1ea)"></div>
<div class="a" style="left:874px;top:209px;width:754px;height:1px;background:#dfe9f5"></div>
<div class="a" style="left:874px;top:209px;width:1px;height:613px;background:#dfe9f5"></div>
<div class="a" style="left:1627px;top:209px;width:1px;height:613px;background:#2fc9f0"></div>
<div class="a" style="left:874px;top:821px;width:754px;height:1px;background:#2fc9f0"></div>
<div class="t" style="left:884px;top:222px;font-size:11.5px;color:#000">Valitse</div>
<div class="a" style="left:1590px;top:217px;width:15px;height:15px;background:#dde8f3;border:1px solid #8a9bb0"></div>
<svg class="a" style="left:1591px;top:218px" width="13" height="13" viewBox="0 0 13 13"><path d="M1 6.5h3M4 3.5v6M4 4.5h7v4H4M4 7h7" stroke="#4a5a70" stroke-width="1.1" fill="none"/></svg>
<div class="a" style="left:1607px;top:217px;width:15px;height:15px;background:#dde8f3;border:1px solid #8a9bb0"></div>
<svg class="a" style="left:1608px;top:218px" width="13" height="13" viewBox="0 0 13 13"><path d="M3 3l7 7M10 3l-7 7" stroke="#4a5a70" stroke-width="1.8"/></svg>
<div class="a" style="left:881px;top:239px;width:740px;height:576px;background:#f0f0f0"></div>
<div class="a" style="left:883px;top:244px;width:275px;height:20px;background:#fff;border:1px solid #7a7a7a"></div>
<div class="t" style="left:885px;top:248px;font-size:10.5px;color:#6a6a6a">Hae (F8 selaa edellisiä)</div>
<div class="a" style="left:1160px;top:244px;width:22px;height:20px;background:#e1e1e1;border:1px solid #adadad"></div>
<div class="a" style="left:1136px;top:271px;width:22px;height:20px;background:#e1e1e1;border:1px solid #adadad"></div>
<div class="a" style="left:1160px;top:271px;width:22px;height:20px;background:#e1e1e1;border:1px solid #adadad"></div>
<svg class="a" style="left:1161px;top:245px" width="20" height="18" viewBox="0 0 20 18"><path d="M3 7h8V3l7 6-7 6v-4H3z" fill="none" stroke="#5a7f96" stroke-width="1.3" stroke-linejoin="round"/></svg>
<svg class="a" style="left:1137px;top:272px" width="20" height="18" viewBox="0 0 20 18"><path d="M15.7,13 A7,7 0 1 1 15.4,4.5 L13.1,6.4 A4,4 0 1 0 13.3,11.3 Z" fill="#eef4f7" stroke="#5b7889" stroke-width="1.1" stroke-linejoin="round"/><path d="M16.8,1.8V9H10.3z" fill="#eef4f7" stroke="#5b7889" stroke-width="1.1" stroke-linejoin="round"/></svg>
<svg class="a" style="left:1161px;top:272px" width="20" height="18" viewBox="0 0 20 18"><path d="M15.17,6.86 L15.41,7.55 L17.58,7.66 L17.58,10.34 L15.41,10.45 L15.17,11.14 L14.85,11.80 L16.31,13.42 L14.42,15.31 L12.80,13.85 L12.14,14.17 L11.45,14.41 L11.34,16.58 L8.66,16.58 L8.55,14.41 L7.86,14.17 L7.20,13.85 L5.58,15.31 L3.69,13.42 L5.15,11.80 L4.83,11.14 L4.59,10.45 L2.42,10.34 L2.42,7.66 L4.59,7.55 L4.83,6.86 L5.15,6.20 L3.69,4.58 L5.58,2.69 L7.20,4.15 L7.86,3.83 L8.55,3.59 L8.66,1.42 L11.34,1.42 L11.45,3.59 L12.14,3.83 L12.80,4.15 L14.42,2.69 L16.31,4.58 L14.85,6.20Z" fill="#f2f7f9" stroke="#5b7889" stroke-width="1.1" stroke-linejoin="round"/><circle cx="10" cy="9.0" r="2.5" fill="#e1e1e1" stroke="#5b7889" stroke-width="1.3"/></svg>
<div class="a" style="left:883px;top:294px;width:300px;height:519px;background:#fff;border:1px solid #828790"></div>
<div class="a" style="left:1165px;top:295px;width:17px;height:517px;background:#f0f0f0"></div>
<div class="a" style="left:1166px;top:426px;width:14px;height:324px;background:#cdcdcd"></div>
<svg class="a" style="left:1168px;top:300px" width="11" height="8" viewBox="0 0 11 8"><path d="M1.5 6.5l4-4 4 4" fill="none" stroke="#555" stroke-width="1.8"/></svg>
<svg class="a" style="left:1168px;top:799px" width="11" height="8" viewBox="0 0 11 8"><path d="M1.5 1.5l4 4 4-4" fill="none" stroke="#555" stroke-width="1.8"/></svg>
<div class="t" style="left:893px;top:318px;font-size:14.5px;font-weight:bold;color:#2f6eb8">Rakennuskomponentit</div>
<svg class="a" style="left:914px;top:342px" width="21" height="17" viewBox="0 0 21 17"><path d="M1 3.5Q1 1.5 3 1.5h4.5l1.5 2H20v12H1z" fill="#a98a5f"/><path d="M0.5 4h19.5v11.5q0 1-1 1H1.5q-1 0-1-1z" fill="#e9c47f" stroke="#b8955f" stroke-width="0.8"/></svg>
<div class="t dt" style="left:940px;top:345px">Aukon puhkaisu</div>
<svg class="a" style="left:914px;top:364px" width="21" height="17" viewBox="0 0 21 17"><path d="M1 3.5Q1 1.5 3 1.5h4.5l1.5 2H20v12H1z" fill="#a98a5f"/><path d="M0.5 4h19.5v11.5q0 1-1 1H1.5q-1 0-1-1z" fill="#e9c47f" stroke="#b8955f" stroke-width="0.8"/></svg>
<div class="t dt" style="left:940px;top:367px">Elementit</div>
<svg class="a" style="left:914px;top:386px" width="21" height="17" viewBox="0 0 21 17"><path d="M1 3.5Q1 1.5 3 1.5h4.5l1.5 2H20v12H1z" fill="#a98a5f"/><path d="M0.5 4h19.5v11.5q0 1-1 1H1.5q-1 0-1-1z" fill="#e9c47f" stroke="#b8955f" stroke-width="0.8"/></svg>
<div class="t dt" style="left:940px;top:389px">Eriste</div>
<svg class="a" style="left:914px;top:408px" width="21" height="17" viewBox="0 0 21 17"><path d="M1 3.5Q1 1.5 3 1.5h4.5l1.5 2H20v12H1z" fill="#a98a5f"/><path d="M0.5 4h19.5v11.5q0 1-1 1H1.5q-1 0-1-1z" fill="#e9c47f" stroke="#b8955f" stroke-width="0.8"/></svg>
<div class="t dt" style="left:940px;top:411px">Hirsiseinät</div>
<svg class="a" style="left:914px;top:430px" width="21" height="17" viewBox="0 0 21 17"><path d="M1 3.5Q1 1.5 3 1.5h4.5l1.5 2H20v12H1z" fill="#a98a5f"/><path d="M0.5 4h19.5v11.5q0 1-1 1H1.5q-1 0-1-1z" fill="#e9c47f" stroke="#b8955f" stroke-width="0.8"/></svg>
<div class="t dt" style="left:940px;top:433px">I-palkin kiinnike</div>
<svg class="a" style="left:914px;top:452px" width="21" height="17" viewBox="0 0 21 17"><path d="M1 3.5Q1 1.5 3 1.5h4.5l1.5 2H20v12H1z" fill="#a98a5f"/><path d="M0.5 4h19.5v11.5q0 1-1 1H1.5q-1 0-1-1z" fill="#e9c47f" stroke="#b8955f" stroke-width="0.8"/></svg>
<div class="t dt" style="left:940px;top:455px">Kaide pilasterit</div>
<svg class="a" style="left:894px;top:477px" width="8" height="11" viewBox="0 0 8 11"><path d="M2 1.5l4 4-4 4" fill="none" stroke="#8a8a8a" stroke-width="1.2"/></svg>
<svg class="a" style="left:914px;top:474px" width="21" height="17" viewBox="0 0 21 17"><path d="M1 3.5Q1 1.5 3 1.5h4.5l1.5 2H20v12H1z" fill="#a98a5f"/><path d="M0.5 4h19.5v11.5q0 1-1 1H1.5q-1 0-1-1z" fill="#e9c47f" stroke="#b8955f" stroke-width="0.8"/></svg>
<div class="t dt" style="left:940px;top:477px">Kuumavalssatut</div>
<svg class="a" style="left:914px;top:496px" width="21" height="17" viewBox="0 0 21 17"><path d="M1 3.5Q1 1.5 3 1.5h4.5l1.5 2H20v12H1z" fill="#a98a5f"/><path d="M0.5 4h19.5v11.5q0 1-1 1H1.5q-1 0-1-1z" fill="#e9c47f" stroke="#b8955f" stroke-width="0.8"/></svg>
<div class="t dt" style="left:940px;top:499px">Liimapuuliitokset</div>
<svg class="a" style="left:894px;top:521px" width="8" height="11" viewBox="0 0 8 11"><path d="M2 1.5l4 4-4 4" fill="none" stroke="#8a8a8a" stroke-width="1.2"/></svg>
<svg class="a" style="left:914px;top:518px" width="21" height="17" viewBox="0 0 21 17"><path d="M1 3.5Q1 1.5 3 1.5h4.5l1.5 2H20v12H1z" fill="#a98a5f"/><path d="M0.5 4h19.5v11.5q0 1-1 1H1.5q-1 0-1-1z" fill="#e9c47f" stroke="#b8955f" stroke-width="0.8"/></svg>
<div class="t dt" style="left:940px;top:521px">Loveus</div>
<svg class="a" style="left:914px;top:540px" width="21" height="17" viewBox="0 0 21 17"><path d="M1 3.5Q1 1.5 3 1.5h4.5l1.5 2H20v12H1z" fill="#a98a5f"/><path d="M0.5 4h19.5v11.5q0 1-1 1H1.5q-1 0-1-1z" fill="#e9c47f" stroke="#b8955f" stroke-width="0.8"/></svg>
<div class="t dt" style="left:940px;top:543px">Naulalevyt</div>
<svg class="a" style="left:914px;top:562px" width="21" height="17" viewBox="0 0 21 17"><path d="M1 3.5Q1 1.5 3 1.5h4.5l1.5 2H20v12H1z" fill="#a98a5f"/><path d="M0.5 4h19.5v11.5q0 1-1 1H1.5q-1 0-1-1z" fill="#e9c47f" stroke="#b8955f" stroke-width="0.8"/></svg>
<div class="t dt" style="left:940px;top:565px">Niitit ja ruuvit</div>
<svg class="a" style="left:914px;top:584px" width="21" height="17" viewBox="0 0 21 17"><path d="M1 3.5Q1 1.5 3 1.5h4.5l1.5 2H20v12H1z" fill="#a98a5f"/><path d="M0.5 4h19.5v11.5q0 1-1 1H1.5q-1 0-1-1z" fill="#e9c47f" stroke="#b8955f" stroke-width="0.8"/></svg>
<div class="t dt" style="left:940px;top:587px">Palkit</div>
<svg class="a" style="left:914px;top:606px" width="21" height="17" viewBox="0 0 21 17"><path d="M1 3.5Q1 1.5 3 1.5h4.5l1.5 2H20v12H1z" fill="#a98a5f"/><path d="M0.5 4h19.5v11.5q0 1-1 1H1.5q-1 0-1-1z" fill="#e9c47f" stroke="#b8955f" stroke-width="0.8"/></svg>
<div class="t dt" style="left:940px;top:609px">Palkit ja vasat</div>
<svg class="a" style="left:914px;top:628px" width="21" height="17" viewBox="0 0 21 17"><path d="M1 3.5Q1 1.5 3 1.5h4.5l1.5 2H20v12H1z" fill="#a98a5f"/><path d="M0.5 4h19.5v11.5q0 1-1 1H1.5q-1 0-1-1z" fill="#e9c47f" stroke="#b8955f" stroke-width="0.8"/></svg>
<div class="t dt" style="left:940px;top:631px">Palkkikengät</div>
<svg class="a" style="left:914px;top:650px" width="21" height="17" viewBox="0 0 21 17"><path d="M1 3.5Q1 1.5 3 1.5h4.5l1.5 2H20v12H1z" fill="#a98a5f"/><path d="M0.5 4h19.5v11.5q0 1-1 1H1.5q-1 0-1-1z" fill="#e9c47f" stroke="#b8955f" stroke-width="0.8"/></svg>
<div class="t dt" style="left:940px;top:653px">Perusliitokset</div>
<svg class="a" style="left:894px;top:675px" width="8" height="11" viewBox="0 0 8 11"><path d="M2 1.5l4 4-4 4" fill="none" stroke="#8a8a8a" stroke-width="1.2"/></svg>
<svg class="a" style="left:914px;top:672px" width="21" height="17" viewBox="0 0 21 17"><path d="M1 3.5Q1 1.5 3 1.5h4.5l1.5 2H20v12H1z" fill="#a98a5f"/><path d="M0.5 4h19.5v11.5q0 1-1 1H1.5q-1 0-1-1z" fill="#e9c47f" stroke="#b8955f" stroke-width="0.8"/></svg>
<div class="t dt" style="left:940px;top:675px">Pilaripalkit</div>
<svg class="a" style="left:914px;top:694px" width="21" height="17" viewBox="0 0 21 17"><path d="M1 3.5Q1 1.5 3 1.5h4.5l1.5 2H20v12H1z" fill="#a98a5f"/><path d="M0.5 4h19.5v11.5q0 1-1 1H1.5q-1 0-1-1z" fill="#e9c47f" stroke="#b8955f" stroke-width="0.8"/></svg>
<div class="t dt" style="left:940px;top:697px">Pystytuki</div>
<svg class="a" style="left:893px;top:721px" width="11" height="8" viewBox="0 0 11 8"><path d="M1.5 1.5l4 4 4-4" fill="none" stroke="#333" stroke-width="1.5"/></svg>
<svg class="a" style="left:914px;top:716px" width="21" height="17" viewBox="0 0 21 17"><path d="M1 3.5Q1 1.5 3 1.5h4.5l1.5 2H20v12H1z" fill="#a98a5f"/><path d="M0.5 4h19.5v11.5q0 1-1 1H1.5q-1 0-1-1z" fill="#e9c47f" stroke="#b8955f" stroke-width="0.8"/></svg>
<div class="t dt" style="left:940px;top:719px">Reikälinjat ja reiät</div>
<div class="a" style="left:936px;top:735px;width:90px;height:21px;background:#cce8ff;border:1px solid #99d1ff"></div>
<svg class="a" style="left:939px;top:738px" width="21" height="17" viewBox="0 0 21 17"><path d="M1 3.5Q1 1.5 3 1.5h4.5l1.5 2H20v12H1z" fill="#a98a5f"/><path d="M0.5 4h19.5v11.5q0 1-1 1H1.5q-1 0-1-1z" fill="#e9c47f" stroke="#b8955f" stroke-width="0.8"/></svg>
<div class="t dt" style="left:965px;top:741px">Läpiviennit</div>
<svg class="a" style="left:914px;top:760px" width="21" height="17" viewBox="0 0 21 17"><path d="M1 3.5Q1 1.5 3 1.5h4.5l1.5 2H20v12H1z" fill="#a98a5f"/><path d="M0.5 4h19.5v11.5q0 1-1 1H1.5q-1 0-1-1z" fill="#e9c47f" stroke="#b8955f" stroke-width="0.8"/></svg>
<div class="t dt" style="left:940px;top:763px">Ristikot</div>
<svg class="a" style="left:914px;top:782px" width="21" height="17" viewBox="0 0 21 17"><path d="M1 3.5Q1 1.5 3 1.5h4.5l1.5 2H20v12H1z" fill="#a98a5f"/><path d="M0.5 4h19.5v11.5q0 1-1 1H1.5q-1 0-1-1z" fill="#e9c47f" stroke="#b8955f" stroke-width="0.8"/></svg>
<div class="t dt" style="left:940px;top:785px">Seinärungot</div>
<svg class="a" style="left:914px;top:804px" width="21" height="17" viewBox="0 0 21 17"><path d="M1 3.5Q1 1.5 3 1.5h4.5l1.5 2H20v12H1z" fill="#a98a5f"/><path d="M0.5 4h19.5v11.5q0 1-1 1H1.5q-1 0-1-1z" fill="#e9c47f" stroke="#b8955f" stroke-width="0.8"/></svg>
<div class="t dt" style="left:940px;top:807px">T</div>
<div class="a" style="left:883px;top:812px;width:300px;height:3px;background:#f0f0f0;border-top:1px solid #828790"></div>
<div class="a" style="left:1186px;top:243px;width:434px;height:570px;background:#fff;border:1px solid #828790"></div>
<div class="t" style="left:1194px;top:250px;font-size:13px;color:#000;transform:scaleY(1.12);transform-origin:0 0">Kuvaus</div>
<div class="t" style="left:1329px;top:250px;font-size:13px;color:#000;transform:scaleY(1.12);transform-origin:0 0">Tunnus</div>
<div class="t" style="left:1439px;top:250px;font-size:13px;color:#000;transform:scaleY(1.12);transform-origin:0 0">Hakemisto</div>
<div class="t" style="left:1549px;top:250px;font-size:13px;color:#000;transform:scaleY(1.12);transform-origin:0 0">Kirjasto</div>
<div class="a" style="left:1322px;top:245px;width:1px;height:48px;background:#e6e6e6"></div>
<div class="a" style="left:1306px;top:269px;width:17px;height:24px;background:#efefef;border:1px solid #cfcfcf;border-right:1px solid #8c8c8c"></div>
<svg class="a" style="left:1309px;top:275px" width="12" height="12" viewBox="0 0 12 12"><path d="M1 1.5h10L7 6v4.5H5V6z" fill="#fff" stroke="#222" stroke-width="1.1"/></svg>
<div class="a" style="left:1432px;top:245px;width:1px;height:48px;background:#e6e6e6"></div>
<div class="a" style="left:1416px;top:269px;width:17px;height:24px;background:#efefef;border:1px solid #cfcfcf;border-right:1px solid #8c8c8c"></div>
<svg class="a" style="left:1419px;top:275px" width="12" height="12" viewBox="0 0 12 12"><path d="M1 1.5h10L7 6v4.5H5V6z" fill="#fff" stroke="#222" stroke-width="1.1"/></svg>
<div class="a" style="left:1542px;top:245px;width:1px;height:48px;background:#e6e6e6"></div>
<div class="a" style="left:1526px;top:269px;width:17px;height:24px;background:#efefef;border:1px solid #cfcfcf;border-right:1px solid #8c8c8c"></div>
<svg class="a" style="left:1529px;top:275px" width="12" height="12" viewBox="0 0 12 12"><path d="M1 1.5h10L7 6v4.5H5V6z" fill="#fff" stroke="#222" stroke-width="1.1"/></svg>
<div class="a" style="left:1188px;top:293px;width:429px;height:1px;background:#111"></div>
<div class="a" style="left:1188px;top:449px;width:178px;height:132px;background:#cce8ff"></div>
<div class="t cap" style="left:1176.5px;width:200px;text-align:center;top:412px">(0200) Läpivienti seinälle</div>
<div class="t cap" style="left:1355px;width:200px;text-align:center;top:412px">(0201) Läpivienti putkelle</div>
<div class="t cap" style="left:1177px;width:200px;text-align:center;top:567px">(0210) Puhkaisu palkilla</div>
<div class="t cap" style="left:1356px;width:200px;text-align:center;top:567px">(0500) Läpivienti</div>
<div class="t cap" style="left:1177px;width:200px;text-align:center;top:722px">(0501) Luukku</div>
<svg class="a" style="left:1209px;top:302px" width="114" height="100" viewBox="0 0 114 100">
 <polygon points="0,81 113,14 114,14 114,100 0,100" fill="#b4b4b4"/>
 <g stroke="#6e6e6e" stroke-width="1.3"><path d="M2,80V100M9,76V100M26,66V100M34,61V100M50,51V100M58,47V100M74,37V100M82,33V100M97,23V100M105,19V100"/></g>
 <polygon points="0,50 89,0 113,14 0,81" fill="#dccaa0"/>
 <polygon points="0,55 88,4 108,15 0,77" fill="#b9b700"/>
 <path d="M0,77L108,15" stroke="#1a7a1a" stroke-width="0.9"/>
 <path d="M0,50L89,0" stroke="#8a8a8a" stroke-width="0.8" stroke-dasharray="1 1"/>
 <path d="M0,81L113,14" stroke="#f4f4f4" stroke-width="1"/>
 <ellipse cx="72" cy="71" rx="9" ry="13" transform="rotate(32 72 71)" fill="#dccaa0" stroke="#666" stroke-width="0.6"/>
 <ellipse cx="70" cy="72" rx="7" ry="11" transform="rotate(32 70 72)" fill="#b9b700"/>
 <path d="M63,82Q74,78 77,62" stroke="#1a7a1a" stroke-width="0.8" fill="none"/>
</svg>
<svg class="a" style="left:1388px;top:310px" width="105" height="92" viewBox="0 0 105 92">
 <path d="M18,42Q14,32 22,30L30,27L34,38z" fill="#b14a10"/>
 <polygon points="0,67 104,12 105,12 105,92 0,92" fill="#b4b4b4"/>
 <g stroke="#6e6e6e" stroke-width="1.2"><path d="M2,66V92M9,62V92M24,54V92M31,51V92M46,43V92M53,39V92M68,31V92M75,28V92M89,20V92M97,16V92"/></g>
 <polygon points="0,49 81,1 104,12 0,67" fill="#dccaa0"/>
 <polygon points="0,53 80,4 100,14 0,64" fill="#b9b700"/>
 <path d="M0,64L100,14" stroke="#1a7a1a" stroke-width="0.9"/>
 <path d="M0,67L104,12" stroke="#f4f4f4" stroke-width="1"/>
 <path d="M40,53Q36,45 44,42L92,62Q100,70 94,80L48,64z" fill="#b5470f"/>
 <path d="M44,42Q38,48 44,60L48,64" fill="#8a3208"/>
 <ellipse cx="92" cy="71" rx="7" ry="10" transform="rotate(30 92 71)" fill="#c9551a" stroke="#6a2a05" stroke-width="0.8"/>
 <path d="M62,48L90,60M60,55L86,68" stroke="#d06a30" stroke-width="1"/>
</svg>
<svg class="a" style="left:1209px;top:451px" width="136" height="112" viewBox="0 0 136 112">
 <rect width="136" height="112" fill="#fff"/>
 <polygon points="0,16 36,36 26,46 0,32" fill="#77664a"/>
 <polygon points="0,16 0,12 38,33 36,36" fill="#d8c8a0"/>
 <polygon points="0,78 107,16 107,106 0,106" fill="#b4b4b4"/>
 <g stroke="#6e6e6e" stroke-width="1.2"><path d="M2,77V106M9,73V106M24,64V106M31,60V106M46,51V106M53,47V106M68,39V106M75,35V106M90,26V106M98,21V106"/></g>
 <polygon points="0,62 84,8 107,20 0,78" fill="#dccaa0"/>
 <polygon points="0,66 83,11 103,22 0,75" fill="#b9b700"/>
 <path d="M0,75L103,22" stroke="#1a7a1a" stroke-width="0.9"/>
 <path d="M0,78L107,20" stroke="#f4f4f4" stroke-width="1"/>
 <polygon points="63,79 65,72 102,92 100,99" fill="#d8c8a0"/>
 <polygon points="63,79 100,99 100,111 63,92" fill="#7b6b4d"/>
 <polygon points="100,99 102,92 102,104 100,111" fill="#cdbb8a"/>
 <path d="M63,79V92" stroke="#222" stroke-width="1.2"/>
</svg>
<svg class="a" style="left:1388px;top:457px" width="136" height="100" viewBox="0 0 136 100">
 <rect width="136" height="100" fill="#b5a888"/>
 <path d="M0,100L136,12" stroke="#3a3530" stroke-width="0.8" stroke-dasharray="1.5 1.5"/>
 <polygon points="67,22 92,39.5 67,57 42,39.5" fill="#7a7a7a" stroke="#222" stroke-width="1"/>
 <polygon points="67,27 85,39.5 67,52 49,39.5" fill="#2a2a2a"/>
 <polygon points="67,27 49,39.5 67,52 60,39" fill="#5a5a5a"/>
 <ellipse cx="66" cy="48.5" rx="3.5" ry="2.5" fill="#fff"/>
</svg>
<svg class="a" style="left:1209px;top:612px" width="136" height="100" viewBox="0 0 136 100">
 <rect width="136" height="100" fill="#b5a888"/>
 <path d="M0,99L136,9" stroke="#3a3530" stroke-width="0.8" stroke-dasharray="1.5 1.5"/>
 <path d="M0,3L10,0" stroke="#3a3530" stroke-width="0.8" stroke-dasharray="1.5 1.5"/>
 <polygon points="65.5,26 91,43.5 65.5,61 40,43.5" fill="#7a7672" stroke="#3a3530" stroke-width="0.8" stroke-dasharray="1.2 1"/>
</svg>

<div class="a" style="left:1187px;top:795px;width:432px;height:17px;background:#f0f0f0"></div>
<div class="a" style="left:1205px;top:796px;width:364px;height:14px;background:#cdcdcd"></div>
<svg class="a" style="left:1192px;top:798px" width="8" height="11" viewBox="0 0 8 11"><path d="M6 1.5l-4 4 4 4" fill="none" stroke="#555" stroke-width="1.8"/></svg>
<svg class="a" style="left:1604px;top:798px" width="8" height="11" viewBox="0 0 8 11"><path d="M2 1.5l4 4-4 4" fill="none" stroke="#555" stroke-width="1.8"/></svg>

</body></html>
